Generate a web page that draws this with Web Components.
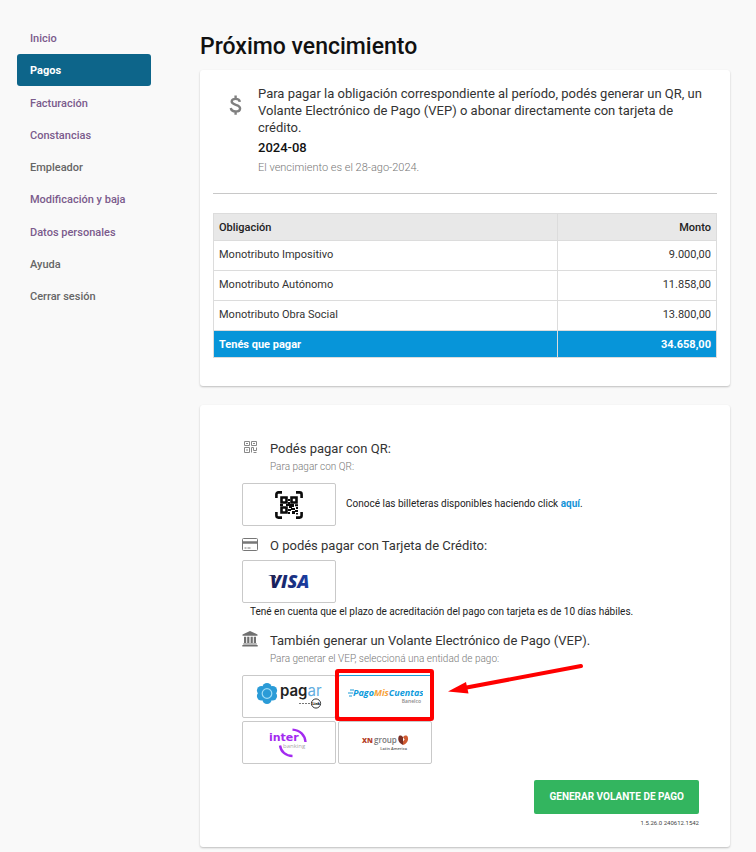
<!DOCTYPE html>
<html lang="es">
<head>
<meta charset="utf-8">
<meta name="viewport" content="width=device-width, initial-scale=1">
<title>Próximo vencimiento</title>
<style>
  body { margin: 0; background: #f9f9f9; color: #222; font-family: Roboto, "Noto Sans", sans-serif; }
</style>
</head>
<body>
<payments-page></payments-page>
<script>
const define = (name, html) => customElements.define(name, class extends HTMLElement {
  constructor() {
    super();
    const t = document.createElement('template');
    t.innerHTML = html;
    this.attachShadow({ mode: 'open' }).append(t.content.cloneNode(true));
  }
});

/* Sidebar entry: attributes "current" and "plain" */
customElements.define('nav-item', class extends HTMLElement {
  constructor() {
    super();
    this.attachShadow({ mode: 'open' }).innerHTML = `
    <style>
      :host { display: block; }
      a { display: block; padding: 1px 13px 0; line-height: 31px; border-radius: 3px; font-size: 11px; font-weight: 500; color: #7b5b8c; text-decoration: none; white-space: nowrap; }
      :host([plain]) a { color: #666; }
      :host([current]) a { background: #0d658a; color: #fff; font-weight: 700; }
    </style>
    <a href="#"><slot></slot></a>`;
    if (this.hasAttribute('current')) this.shadowRoot.querySelector('a').setAttribute('aria-current', 'page');
  }
});

define('side-menu', `
  <style>
    :host { display: block; }
    nav { display: flex; flex-direction: column; justify-content: space-between; min-height: 290px; }
  </style>
  <nav aria-label="Menú">
    <nav-item>Inicio</nav-item>
    <nav-item current>Pagos</nav-item>
    <nav-item>Facturación</nav-item>
    <nav-item>Constancias</nav-item>
    <nav-item plain>Empleador</nav-item>
    <nav-item>Modificación y baja</nav-item>
    <nav-item>Datos personales</nav-item>
    <nav-item plain>Ayuda</nav-item>
    <nav-item plain>Cerrar sesión</nav-item>
  </nav>`);

define('page-card', `
  <style>
    :host { display: block; background: #fff; border-radius: 3px; box-shadow: 0 1px 2px rgba(0,0,0,.24); }
  </style>
  <slot></slot>`);

define('due-summary', `
  <style>
    :host { display: grid; grid-template-columns: 45px 1fr; padding: 15px 0 17px; border-bottom: 1px solid #c8c8c8; }
    svg { margin: 10px 0 0 16px; display: block; }
    p { margin: 0; font-size: 13px; line-height: 17px; color: #333; }
    p.period { font-weight: 500; color: #111; margin-top: 3px; }
    p.due { font-size: 11px; color: #777; font-weight: 300; margin-top: 3px; }
  </style>
  <svg width="13" height="20" viewBox="0 0 12 20" fill="none" stroke="#808080" stroke-width="2.4" aria-hidden="true">
    <path d="M10.3 6.800C10.100 4.800 8.500 3.900 6.100 3.900 3.800 3.900 2.200 4.900 2.200 6.600c0 4.200 8.400 2.300 8.400 6.800 0 2-1.800 3-4.400 3-2.800 0-4.600-1.200-4.900-3.400M6.100.4v3.400M6.100 16.300v3.400"/>
  </svg>
  <div>
    <p>Para pagar la obligación correspondiente al período, podés generar un QR, un Volante Electrónico de Pago (VEP) o abonar directamente con tarjeta de crédito.</p>
    <p class="period">2024-08</p>
    <p class="due">El vencimiento es el 28-ago-2024.</p>
  </div>`);

define('obligation-table', `
  <style>
    :host { display: block; }
    table { width: 100%; border-collapse: collapse; font-size: 11px; line-height: 16px; color: #333; }
    th, td { border: 1px solid #dcdcdc; padding: 6px 5px 4px; text-align: left; font-weight: 400; }
    tbody td { padding: 6px 5px 7px; }
    th:last-child, td:last-child { text-align: right; width: 148px; }
    thead th { background: #e8e8e8; font-weight: 500; color: #222; }
    tfoot th, tfoot td { background: #0795d9; color: #fff; font-weight: 700; border-top-color: #0795d9; }
  </style>
  <table>
    <thead><tr><th scope="col">Obligación</th><th scope="col">Monto</th></tr></thead>
    <tbody>
      <tr><td>Monotributo Impositivo</td><td>9.000,00</td></tr>
      <tr><td>Monotributo Autónomo</td><td>11.858,00</td></tr>
      <tr><td>Monotributo Obra Social</td><td>13.800,00</td></tr>
    </tbody>
    <tfoot><tr><th scope="row">Tenés que pagar</th><td>34.658,00</td></tr></tfoot>
  </table>`);

define('method-heading', `
  <style>
    :host { display: grid; grid-template-columns: 16px 1fr; column-gap: 12px; }
    ::slotted(svg) { display: block; }
    h2 { margin: 0; font-size: 13px; line-height: 20px; font-weight: 400; color: #333; }
    .hint { grid-column: 2; font-size: 10px; line-height: 16px; font-weight: 300; color: #777; }
  </style>
  <slot name="icon"></slot>
  <h2><slot></slot></h2>
  <div class="hint"><slot name="hint"></slot></div>`);

define('pay-option', `
  <style>
    :host { display: block; position: relative; }
    button { display: flex; align-items: center; justify-content: center; width: 100%; height: 43px; padding: 0; background: #fff; border: 1px solid #c9c9c9; border-radius: 2px; font: inherit; cursor: pointer; }
    :host([selected]) button { border-color: #1a9cd8; }
    slot[name=mark] { display: contents; }
  </style>
  <button type="button"><slot></slot></button>
  <slot name="mark"></slot>`);

define('callout-mark', `
  <style>
    :host { position: absolute; left: -4px; top: -12px; pointer-events: none; }
    svg { display: block; }
  </style>
  <svg width="252" height="62" viewBox="0 0 252 62" aria-hidden="true">
    <rect x="3" y="8" width="95" height="48" rx="1" fill="none" stroke="#f00" stroke-width="4"/>
    <path d="M247 3L130 25" stroke="#f00" stroke-width="4" stroke-linecap="round"/>
    <path d="M114 28.500L132 19l2.500 11.500z" fill="#f00"/>
  </svg>`);

define('logo-qr', `
  <style>:host, svg { display: block; }</style>
  <svg width="28" height="28" viewBox="0 0 28 28" role="img" aria-label="QR">
    <g fill="none" stroke="#0b0b0b" stroke-width="2.600">
      <path d="M1.400 7V3.400a2 2 0 0 1 2-2H7M21 1.400h3.600a2 2 0 0 1 2 2V7M26.600 21v3.600a2 2 0 0 1-2 2H21M7 26.600H3.400a2 2 0 0 1-2-2V21"/>
      <path d="M6.500 6.500h5v5h-5zM16.500 6.500h5v5h-5zM6.500 16.500h5v5h-5z"/>
    </g>
    <path fill="#0b0b0b" d="M13 8h2v2h-2zM13 11h2v2h-2zM5 13h3v2H5zM11 13h6v4h-3v-2h-3zM17 13h2v3h-2zM20 13.200h3v2h-3zM13 18h3v2h-3zM13 21h2v2h-2zM16 17h4v2h-4zM20 19h3v2h-3zM17 20h3v3h-3zM21 16h2v2h-2zM21 22h2v1.500h-2z"/>
  </svg>`);

define('logo-visa', `
  <style>:host, svg { display: block; }</style>
  <svg width="46" height="26" viewBox="-3 -5 46 26">
    <defs><linearGradient id="v" x2="1"><stop stop-color="#171c52"/><stop offset="1" stop-color="#1a3fa6"/></linearGradient></defs>
    <text x="1" y="14" font-family="Open Sans, sans-serif" font-size="18" font-weight="800" font-style="italic" fill="url(#v)">VISA</text>
    <path d="M-1 1h7l1.500 3.500C5 3 2 1.700-1 1z" fill="#20265c"/>
  </svg>`);

define('logo-pagar', `
  <style>:host, svg { display: block; }</style>
  <svg width="70" height="32" viewBox="-2 -1 70 32">
    <g fill="#2a9bd7">
      <circle cx="11" cy="5.500" r="4.600"/><circle cx="16.500" cy="8.500" r="4.600"/><circle cx="16.500" cy="14" r="4.600"/>
      <circle cx="11" cy="17.500" r="4.600"/><circle cx="5.500" cy="14" r="4.600"/><circle cx="5.500" cy="8.500" r="4.600"/><circle cx="11" cy="11.500" r="7"/>
    </g>
    <circle cx="11" cy="11.500" r="4.800" fill="#2a9bd7" stroke="#9fdcf6" stroke-width="1.200"/>
    <text x="24" y="14" font-family="Inter, sans-serif" font-size="15" font-weight="600" fill="#222">pag<tspan fill="#62addf" font-weight="400">ar</tspan></text>
    <path d="M43 21.500h12" stroke="#777" stroke-dasharray="2 1"/>
    <circle cx="60" cy="21.500" r="4.600" fill="#fff" stroke="#333"/>
    <text x="60" y="23" text-anchor="middle" font-family="Roboto, sans-serif" font-size="4" font-weight="900" fill="#111">Link</text>
  </svg>`);

define('logo-pmc', `
  <style>:host, svg { display: block; }</style>
  <svg width="76" height="26" viewBox="0 0 76 26">
    <path d="M3 6h4M1 9h5M2 12h3" stroke="#1a9cd8" stroke-width="1.200"/>
    <text x="6" y="12" font-family="Open Sans, sans-serif" font-size="9" font-weight="700" font-style="italic" fill="#0f9bdc">Pago<tspan fill="#f7a23b">Mis</tspan>Cuentas</text>
    <text x="74" y="19" text-anchor="end" font-family="Open Sans, sans-serif" font-size="5" font-weight="600" fill="#888">Banelco</text>
  </svg>`);

define('logo-inter', `
  <style>:host, svg { display: block; }</style>
  <svg width="40" height="30" viewBox="0 0 40 30">
    <path d="M23.500 1.600C31 2 36 7 36.500 14M11 17.500C12 24 17 28 23.500 28" fill="none" stroke="#a32af0" stroke-width="2.400"/>
    <text x="0" y="13" font-family="DejaVu Sans, sans-serif" font-size="11" font-weight="700" fill="#a32af0">inter</text>
    <text x="14" y="20" font-family="Open Sans, sans-serif" font-size="6" fill="#aaa">banking</text>
  </svg>`);

define('logo-xn', `
  <style>:host, svg { display: block; }</style>
  <svg width="48" height="20" viewBox="0 0 48 20">
    <text x="1" y="10" font-family="Open Sans, sans-serif" font-size="7" font-weight="800" fill="#b5412a">XN</text>
    <text x="13" y="10" font-family="Open Sans, sans-serif" font-size="8" font-weight="600" fill="#777">group</text>
    <path d="M42 12C38.500 10.500 36.500 7.500 37.500 4c.7-2 3.200-2 4.500.3V12z" fill="#7a2f24"/>
    <path d="M42 12c4-1.200 5.800-4.500 4.800-8-.8-2-3.600-2-4.800.3l1.600 2.200L42 8.500z" fill="#cf5a32"/>
    <text x="46" y="17" text-anchor="end" font-family="Open Sans, sans-serif" font-size="4" font-weight="600" fill="#555">Latin America</text>
  </svg>`);

define('payment-methods', `
  <style>
    :host { display: block; }
    .row { display: grid; grid-template-columns: 94px 1fr; column-gap: 10px; align-items: center; }
    .qr { margin: 8px 0 10px; }
    .visa { margin-top: 4px; }
    p { margin: 0; font-size: 10px; line-height: 16px; color: #222; }
    .row p { padding-bottom: 2px; }
    p a { color: #1594d8; font-weight: 700; text-decoration: none; }
    .note { margin: 1px 8px 11px; }
    .vep { display: grid; grid-template-columns: repeat(2, 94px); gap: 3px 2px; margin-top: 8px; }
    .actions { display: flex; flex-direction: column; align-items: flex-end; margin-top: 16px; }
    .submit { height: 34px; padding: 0 15px; border: 0; border-radius: 2px; background: #33b55f; color: #fff; font: 700 10px/16px Roboto, sans-serif; cursor: pointer; }
    small { margin-top: 4px; font-size: 6px; line-height: 10px; color: #444; }
  </style>
  <method-heading>
    <svg slot="icon" width="16" height="16" viewBox="0 0 16 16" fill="none" stroke="#888" stroke-width="1" aria-hidden="true">
      <path d="M2.500 2.500h5v4h-5zM9.500 2.500h5v4h-5zM2.500 8.500h5v5h-5zM4 4.500h2M11 4.500h2M4 11h2M9.500 13.500v-5h2v3h3v-3M11.500 13.500h3"/>
    </svg>
    Podés pagar con QR:
    <span slot="hint">Para pagar con QR:</span>
  </method-heading>
  <div class="row qr">
    <pay-option><logo-qr></logo-qr></pay-option>
    <p>Conocé las billeteras disponibles haciendo click <a href="#">aquí</a>.</p>
  </div>
  <method-heading>
    <svg slot="icon" width="16" height="16" viewBox="0 0 16 16" aria-hidden="true">
      <rect x=".5" y="2.500" width="15" height="12" rx="1" fill="#fff" stroke="#777"/>
      <path d="M1 6.500h14" stroke="#777" stroke-width="2.500"/><path d="M2.500 12h2M5.500 12h3" stroke="#777"/>
    </svg>
    O podés pagar con Tarjeta de Crédito:
  </method-heading>
  <div class="row visa"><pay-option><logo-visa></logo-visa></pay-option></div>
  <p class="note">Tené en cuenta que el plazo de acreditación del pago con tarjeta es de 10 días hábiles.</p>
  <method-heading>
    <svg slot="icon" width="16" height="16" viewBox="0 0 16 16" fill="#707070" aria-hidden="true">
      <path d="M8 0l7.500 3.500v1.300H.5V3.500zM2 5.800h2.200V12H2zM5.200 5.800h2.200V12H5.200zM8.600 5.800h2.200V12H8.600zM11.800 5.800H14V12h-2.200zM1.200 12.400h13.600v1.200H1.200zM.3 14h15.400v1.500H.3z"/>
    </svg>
    También generar un Volante Electrónico de Pago (VEP).
    <span slot="hint">Para generar el VEP, seleccioná una entidad de pago:</span>
  </method-heading>
  <div class="vep">
    <pay-option><logo-pagar></logo-pagar></pay-option>
    <pay-option selected><logo-pmc></logo-pmc><callout-mark slot="mark"></callout-mark></pay-option>
    <pay-option><logo-inter></logo-inter></pay-option>
    <pay-option><logo-xn></logo-xn></pay-option>
  </div>
  <div class="actions">
    <button class="submit" type="button">GENERAR VOLANTE DE PAGO</button>
    <small>1.5.26.0 240612.1542</small>
  </div>`);

define('payments-page', `
  <style>
    :host { display: grid; grid-template-columns: 134px minmax(0, 1fr); column-gap: 49px; padding: 22px 26px 5px 17px; align-items: start; }
    h1 { margin: 9px 0 7px; font-size: 23px; line-height: 32px; font-weight: 500; color: #111; }
    .due { padding: 0 13px 28px; }
    .due obligation-table { margin-top: 19px; }
    .methods { margin-top: 19px; padding: 34px 31px 19px 42px; }
  </style>
  <side-menu></side-menu>
  <main>
    <h1>Próximo vencimiento</h1>
    <page-card class="due"><due-summary></due-summary><obligation-table></obligation-table></page-card>
    <page-card class="methods"><payment-methods></payment-methods></page-card>
  </main>`);
</script>
</body>
</html>
